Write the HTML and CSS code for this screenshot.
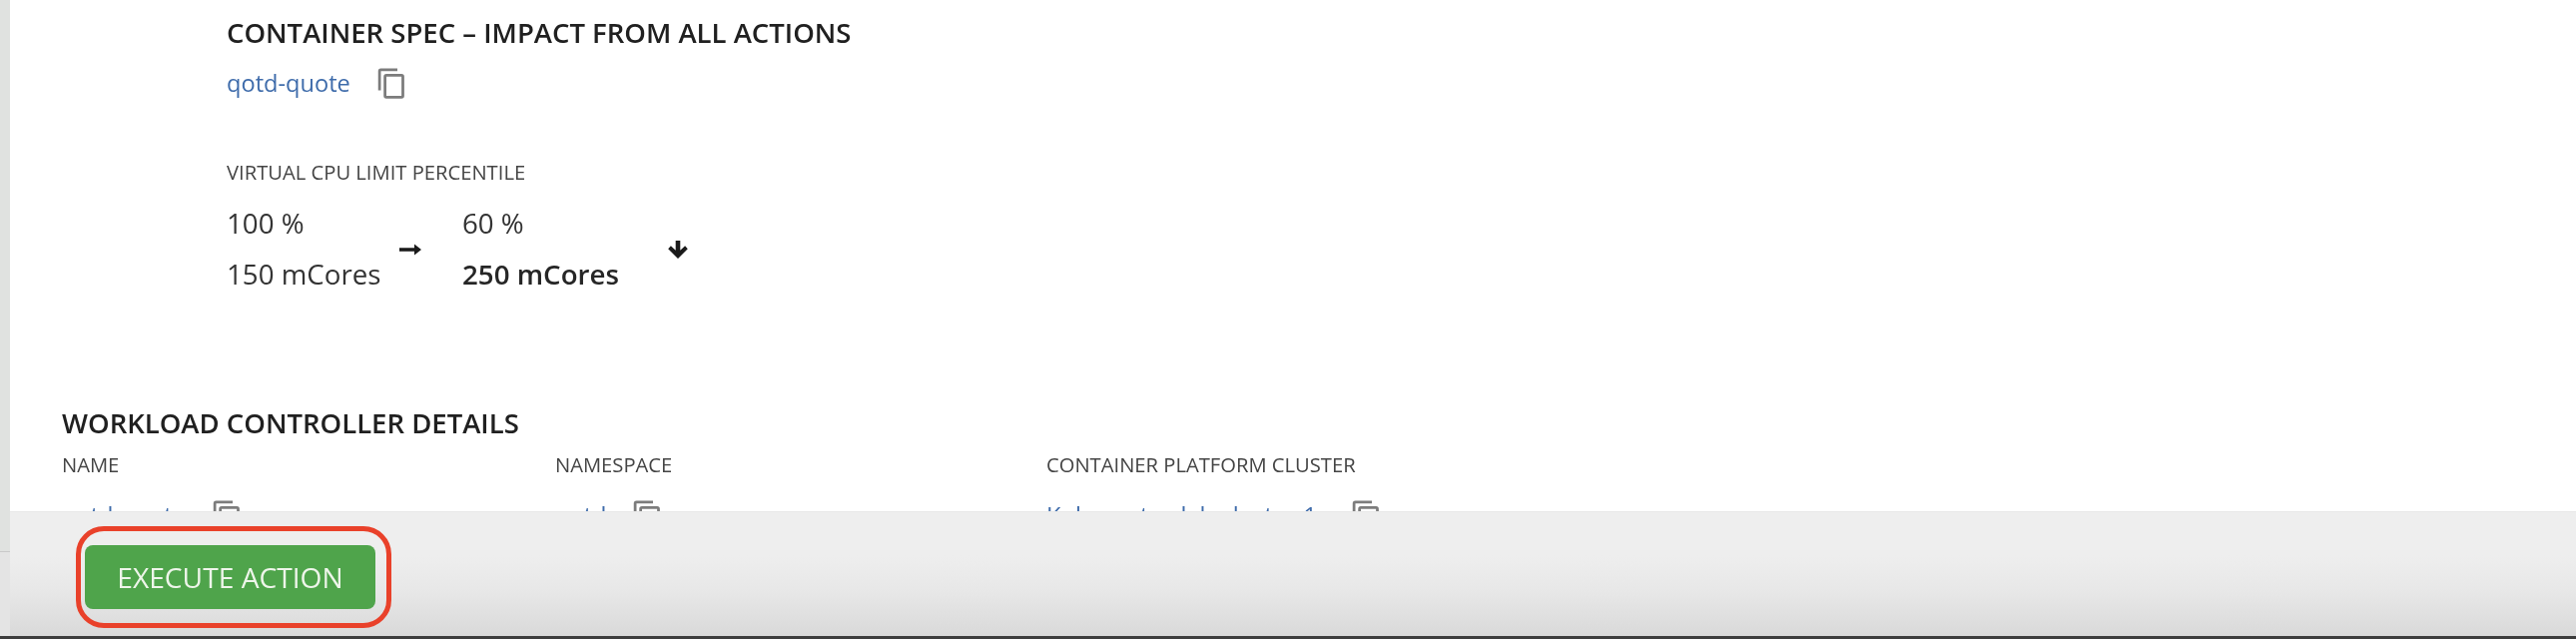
FILE: index.html
```html
<!DOCTYPE html>
<html lang="en">
<head>
    <meta charset="UTF-8">
    <meta name="viewport" content="width=device-width, initial-scale=1.0">
    <link rel="stylesheet" href="styles.css">
    <title>Execute Action</title>
</head>
<body>
    <div class="page">
        <div class="content">
            <section class="spec">
                <h2 class="heading">CONTAINER SPEC – IMPACT FROM ALL ACTIONS</h2>
                <div class="link-row spec-link">
                    <a class="link">qotd-quote</a>
                    <svg class="copy" viewBox="0 0 24 24"><path d="M16 1H4a2 2 0 0 0-2 2v14h2V3h12V1zm3 4H8a2 2 0 0 0-2 2v14a2 2 0 0 0 2 2h11a2 2 0 0 0 2-2V7a2 2 0 0 0-2-2zm0 16H8V7h11v14z"/></svg>
                </div>
                <div class="label metric-label">VIRTUAL CPU LIMIT PERCENTILE</div>
                <div class="metric">
                    <div class="metric-col from">
                        <div>100 %</div>
                        <div>150 mCores</div>
                    </div>
                    <svg class="arrow-right" viewBox="0 0 22 12"><path d="M0 4.300h15V.6l7 5.400-7 5.400V7.700H0z"/></svg>
                    <div class="metric-col to">
                        <div>60 %</div>
                        <div class="strong">250 mCores</div>
                    </div>
                    <svg class="arrow-down" viewBox="0 0 20 20"><path d="M7.700 0h4.600v9.800l4.800-4.500 2.700 2.900L10 18 .2 8.200l2.700-2.900 4.800 4.500z"/></svg>
                </div>
            </section>

            <section class="details">
                <h2 class="heading">WORKLOAD CONTROLLER DETAILS</h2>
                <div class="details-grid">
                    <div class="detail">
                        <div class="label">NAME</div>
                        <div class="link-row">
                            <a class="link">qotd-quote</a>
                            <svg class="copy" viewBox="0 0 24 24"><path d="M16 1H4a2 2 0 0 0-2 2v14h2V3h12V1zm3 4H8a2 2 0 0 0-2 2v14a2 2 0 0 0 2 2h11a2 2 0 0 0 2-2V7a2 2 0 0 0-2-2zm0 16H8V7h11v14z"/></svg>
                        </div>
                    </div>
                    <div class="detail">
                        <div class="label">NAMESPACE</div>
                        <div class="link-row">
                            <a class="link">qotd</a>
                            <svg class="copy" viewBox="0 0 24 24"><path d="M16 1H4a2 2 0 0 0-2 2v14h2V3h12V1zm3 4H8a2 2 0 0 0-2 2v14a2 2 0 0 0 2 2h11a2 2 0 0 0 2-2V7a2 2 0 0 0-2-2zm0 16H8V7h11v14z"/></svg>
                        </div>
                    </div>
                    <div class="detail">
                        <div class="label">CONTAINER PLATFORM CLUSTER</div>
                        <div class="link-row cluster-row">
                            <a class="link">Kubernetes-lab-cluster-1</a>
                            <svg class="copy" viewBox="0 0 24 24"><path d="M16 1H4a2 2 0 0 0-2 2v14h2V3h12V1zm3 4H8a2 2 0 0 0-2 2v14a2 2 0 0 0 2 2h11a2 2 0 0 0 2-2V7a2 2 0 0 0-2-2zm0 16H8V7h11v14z"/></svg>
                        </div>
                    </div>
                </div>
            </section>
        </div>

        <div class="footer">
            <div class="highlight">
                <button class="execute">EXECUTE ACTION</button>
            </div>
        </div>
    </div>
</body>
</html>
```

FILE: styles.css
```css
html, body {
    margin: 0;
    height: 100%;
    background: #ffffff;
}

body {
    font-family: "Open Sans", "Liberation Sans", sans-serif;
    color: #333333;
    overflow: hidden;
}

/* The grey strip down the left shows through the page padding */
.page {
    display: flex;
    flex-direction: column;
    height: 640px;
    box-sizing: border-box;
    padding-left: 10px;
    border-bottom: 3px solid #3d3d3d;
    background: linear-gradient(#e0e2e0 552px, #c9c9c9 552px, #c9c9c9 553px, #e4e4e4 553px);
}

/* Everything above the footer, cut off by it */
.content {
    height: 512px;
    flex: none;
    overflow: hidden;
    background: #ffffff;
}

.spec, .details {
    filter: blur(0.5px);
}

.heading {
    margin: 0;
    font-size: 27.5px;
    line-height: 32px;
    font-weight: 600;
    color: #202020;
}

.spec {
    padding: 17px 0 0 217px;
}

.spec-link {
    margin-top: 17px;
}

.link-row {
    display: flex;
    align-items: center;
    gap: 25px;
    height: 34px;
}

.cluster-row {
    gap: 33px;
}

.link {
    font-size: 23.6px;
    line-height: 34px;
    color: #3f6cab;
}

.copy {
    width: 33px;
    height: 33px;
    fill: #7c7c7c;
}

.label {
    font-size: 20.2px;
    line-height: 26px;
    color: #444444;
}

.metric-label {
    margin-top: 59px;
}

.metric {
    display: flex;
    align-items: center;
    margin-top: 21px;
    font-size: 27.7px;
}

.metric-col {
    display: flex;
    flex-direction: column;
    gap: 17px;
    line-height: 34px;
}

.from {
    width: 173px;
}

.to {
    margin-left: 41px;
    width: 206px;
}

.strong {
    font-weight: 600;
    color: #262626;
}

.arrow-right {
    width: 22px;
    height: 12px;
    margin-top: 2px;
    fill: #1a1a1a;
}

.arrow-down {
    width: 20px;
    height: 20px;
    margin-top: 5px;
    fill: #1a1a1a;
}

.details {
    padding: 117px 0 0 52px;
}

.details-grid {
    display: grid;
    grid-template-columns: 494px 492px 500px;
    margin-top: 12px;
}

.detail .link-row {
    margin-top: 21px;
}

.footer {
    flex: 1;
    display: flex;
    align-items: flex-start;
    padding: 14px 0 0 66px;
    border-top: 1px solid #e8e8e8;
    background: linear-gradient(#eeeeee 0%, #eeeeee 35%, #e7e7e7 65%, #d9d9d9 100%);
}

/* Red annotation ring around the button */
.highlight {
    display: flex;
    align-items: center;
    box-sizing: border-box;
    width: 316px;
    height: 102px;
    padding-left: 4px;
    border: 5px solid #e9412a;
    border-radius: 28px;
}

.execute {
    width: 291px;
    height: 64px;
    border: none;
    border-radius: 8px;
    background: #4fa44b;
    color: #eef5ea;
    font-family: inherit;
    font-size: 28.2px;
    filter: blur(0.5px);
}
```
